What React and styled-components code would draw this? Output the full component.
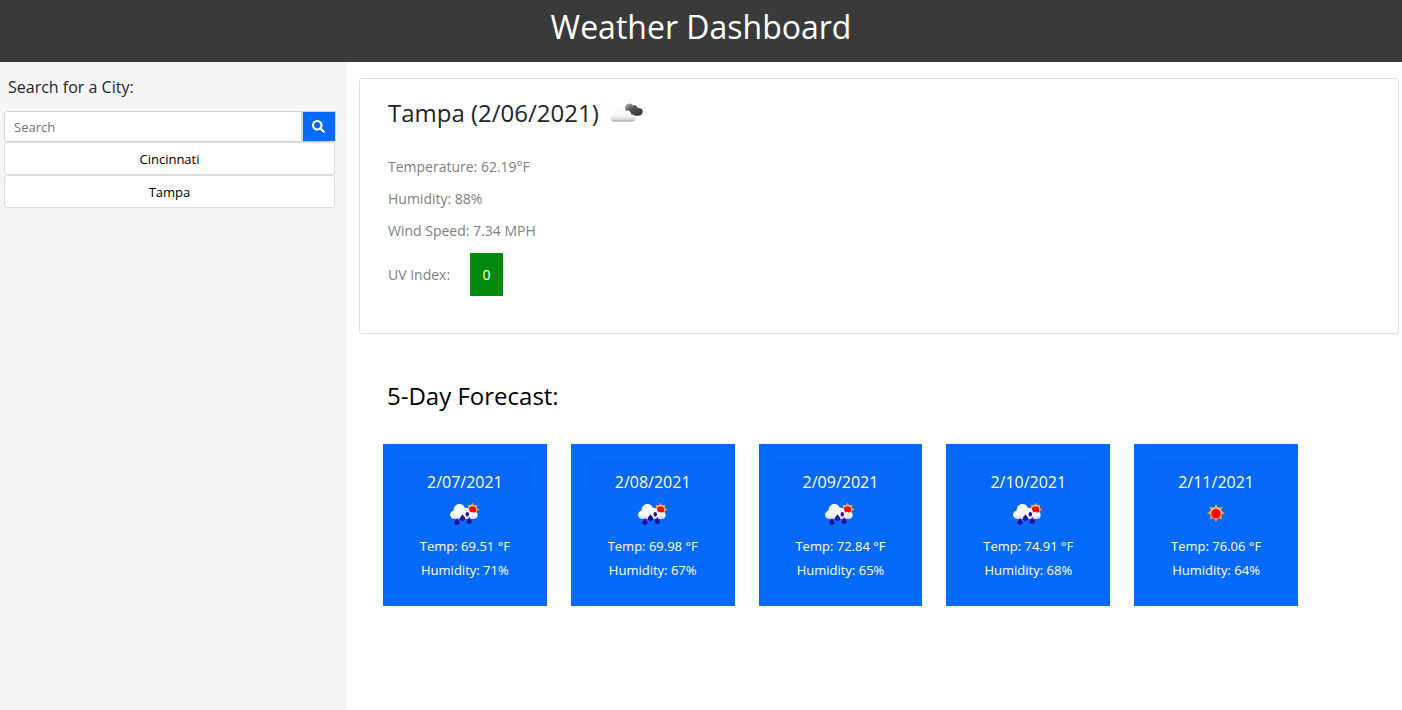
import React from "react";
import styled, { createGlobalStyle } from "styled-components";

const GlobalStyle = createGlobalStyle`
  *, *::before, *::after { box-sizing: border-box; }
  body {
    margin: 0;
    background: #fff;
    color: #212529;
    font-family: "Open Sans", "Noto Sans", sans-serif;
    font-size: 16px;
    line-height: 24px;
  }
  h1, h2, h3, p { margin: 0; font-weight: 400; }
  button, input { font-family: inherit; }
`;

const Page = styled.div`
  display: flex;
  flex-direction: column;
  min-height: 100vh;
`;

const Header = styled.header`
  padding: 8px 8px 16px;
  background: #3a3a3a;
  text-align: center;
`;

const Title = styled.h1`
  color: #fff;
  font-size: 32px;
  font-weight: 500;
  line-height: 38px;
`;

const Columns = styled.div`
  display: flex;
  flex: 1;
`;

const Sidebar = styled.aside`
  flex: 0 0 24.75%;
  padding: 13px 12px 16px 4px;
  background: #f6f4f5;
`;

const SearchLabel = styled.label`
  display: block;
  padding: 0 4px;
  margin-bottom: 12px;
`;

const SearchRow = styled.form`
  display: flex;
  height: 31px;
  margin-right: -1px;
`;

const SearchInput = styled.input`
  flex: 1;
  min-width: 0;
  padding: 1px 9px 0;
  border: 1px solid #ced4da;
  border-radius: 3px 0 0 3px;
  background: #fff;
  font-size: 13px;
  color: #212529;
  &::placeholder { color: #6c757d; opacity: 1; }
`;

const SearchButton = styled.button`
  display: flex;
  align-items: center;
  justify-content: center;
  width: 34px;
  padding: 0;
  border: 1px solid #ced4da;
  background: #066aff;
  color: #fff;
`;

const CityButton = styled.button`
  display: block;
  width: 100%;
  height: 33px;
  padding: 0;
  border: 1px solid #dcdcde;
  border-radius: 3px;
  background: #fff;
  color: #000;
  font-size: 13px;
  font-weight: 500;
`;

const Main = styled.main`
  flex: 1;
  min-width: 0;
  padding: 16px 3px 16px 12px;
`;

const CurrentCard = styled.section`
  padding: 17px 28px 37px;
  border: 1px solid #dfdfdf;
  border-radius: 3px;
`;

const CityHeading = styled.h2`
  display: flex;
  align-items: center;
  gap: 10px;
  margin-bottom: 21px;
  font-size: 24px;
  line-height: 34px;
`;

const Reading = styled.p`
  display: flex;
  align-items: center;
  gap: 20px;
  min-height: 32px;
  color: #808080;
  font-size: 14px;
`;

const UvReading = styled(Reading)`
  padding-top: 6px;
`;

const UvBadge = styled.span`
  min-width: 33px;
  padding: 10px 12px 9px;
  background: #028a0a;
  color: #fff;
  font-weight: 500;
  text-align: center;
`;

const ForecastSection = styled.section`
  padding: 44px 101px 0 24px;
`;

const ForecastHeading = styled.h2`
  padding: 0 4px;
  margin-bottom: 31px;
  color: #000;
  font-size: 24px;
  line-height: 35px;
`;

const ForecastGrid = styled.div`
  display: grid;
  grid-template-columns: repeat(5, 1fr);
  gap: 24px;
`;

const DayCard = styled.article`
  display: flex;
  flex-direction: column;
  align-items: center;
  padding: 16px 16px 24px;
  background: #066aff;
  color: #fff;
  font-size: 13px;
  font-weight: 500;
`;

const DayDate = styled.h3`
  align-self: stretch;
  padding-top: 10px;
  border-radius: 2px 2px 0 0;
  background: #0667f8;
  font-size: 16px;
  font-weight: 500;
  text-align: center;
`;

const IconSlot = styled.div`
  display: flex;
  align-items: center;
  height: 40px;
`;

const SearchIcon = () => (
  <svg width="13" height="13" viewBox="0 0 512 512" fill="currentColor" aria-hidden="true">
    <path d="M505 442.7L405.3 343c-4.5-4.500-10.600-7-17-7H372c27.600-35.300 44-79.700 44-128C416 93.100 322.900 0 208 0S0 93.100 0 208s93.100 208 208 208c48.300 0 92.700-16.400 128-44v16.300c0 6.400 2.500 12.500 7 17l99.700 99.700c9.400 9.400 24.600 9.400 33.900 0l28.300-28.300c9.400-9.400 9.400-24.600.1-34zM208 336c-70.700 0-128-57.200-128-128 0-70.700 57.200-128 128-128 70.700 0 128 57.200 128 128 0 70.700-57.200 128-128 128z" />
  </svg>
);

const CloudyIcon = () => (
  <svg width="36" height="24" viewBox="0 0 36 24" role="img" aria-label="Broken clouds">
    <defs>
      <linearGradient id="cloudShade" x1="0" y1="0" x2="0" y2="1">
        <stop offset="0" stopColor="#fcfcfc" />
        <stop offset="0.65" stopColor="#f2f2f2" />
        <stop offset="0.88" stopColor="#d4d4d4" />
        <stop offset="1" stopColor="#999999" />
      </linearGradient>
      <linearGradient id="darkCloud" x1="0" y1="0" x2="1" y2="1">
        <stop offset="0" stopColor="#c4c4c4" />
        <stop offset="0.4" stopColor="#555555" />
        <stop offset="1" stopColor="#303030" />
      </linearGradient>
    </defs>
    <path fill="url(#darkCloud)" d="M16 7c0-2.500 2-4.500 4.500-4.500 1.500 0 2.500.6 3.300 2 1-.6 2.600-.3 3.700.5.8.6 1.200 1.200 1.400 2 2.800-.3 4.900 1 4.900 3.400 0 2.600-2 4.300-4.600 4.300h-4C21 14.500 16 12 16 7z" />
    <path fill="url(#cloudShade)" d="M5.500 20.500C3 20.500 1.500 19 1.500 17c0-2 1.500-3.600 3.400-4 .2-4 2.700-7 6.300-7 2.600 0 4.500 1.300 5.500 3.600 3-.7 5.400 1 5.700 3.900 2.700-.2 4.400 1.300 4.400 3.500s-1.600 3.500-4.300 3.500z" />
  </svg>
);

const sunPoints = (cx, cy, outer, inner) =>
  Array.from({ length: 16 }, (_, i) => {
    const angle = (i * Math.PI) / 8 - Math.PI / 2;
    const r = i % 2 ? inner : outer;
    return `${cx + r * Math.cos(angle)},${cy + r * Math.sin(angle)}`;
  }).join(" ");

const SunShape = ({ cx, cy, size }) => (
  <g>
    <polygon points={sunPoints(cx, cy, size, size * 0.62)} fill="#e89a2c" />
    <circle cx={cx} cy={cy} r={size * 0.65} fill="#f8cf82" />
    <circle cx={cx} cy={cy + size * 0.08} r={size * 0.54} fill="#ff0800" />
  </g>
);

const SunIcon = () => (
  <svg width="20" height="20" viewBox="0 0 20 20" role="img" aria-label="Clear sky">
    <SunShape cx={10} cy={9} size={9} />
  </svg>
);

const Drop = ({ x, y }) => (
  <path
    transform={`translate(${x} ${y})`}
    d="M0-3.600C.5-2 2.700-.6 2.700 1.100 2.700 2.600 1.500 3.500 0 3.500S-2.700 2.600-2.700 1.100C-2.700-.6-.5-2 0-3.600z"
    fill="#2b0ba5"
  />
);

const RainIcon = () => (
  <svg width="32" height="24" viewBox="0 0 32 24" role="img" aria-label="Rain">
    <defs>
      <linearGradient id="rainCloud" x1="0" y1="0" x2="0" y2="1">
        <stop offset="0" stopColor="#ffffff" />
        <stop offset="0.75" stopColor="#fafafd" />
        <stop offset="1" stopColor="#c9cde0" />
      </linearGradient>
    </defs>
    <SunShape cx={23.500} cy={7.500} size={7} />
    <path fill="url(#rainCloud)" d="M5.500 17C3 17 1 15.300 1 13c0-2.200 1.400-3.800 3.500-4.200C4.700 4.700 7 2 10.400 2c2.800 0 4.500 1.400 5.400 3.700 2.300-.3 4 .8 4.700 2.900l.9 1.900c1.200-.6 2.600-.6 3.700.2 1-.9 3.200-.3 3.400 1.500.5 2.600-1 4.800-3.700 4.800z" />
    <Drop x={8} y={19.500} />
    <Drop x={13.500} y={15.500} />
    <Drop x={20.300} y={18.500} />
    <ellipse cx="18.300" cy="12.300" rx="1.700" ry="2.200" fill="#2b0ba5" />
  </svg>
);

const cities = ["Cincinnati", "Tampa"];

const forecast = [
  { date: "2/07/2021", temp: "69.51", humidity: 71, Icon: RainIcon },
  { date: "2/08/2021", temp: "69.98", humidity: 67, Icon: RainIcon },
  { date: "2/09/2021", temp: "72.84", humidity: 65, Icon: RainIcon },
  { date: "2/10/2021", temp: "74.91", humidity: 68, Icon: RainIcon },
  { date: "2/11/2021", temp: "76.06", humidity: 64, Icon: SunIcon },
];

export default function App() {
  return (
    <Page>
      <GlobalStyle />
      <Header>
        <Title>Weather Dashboard</Title>
      </Header>
      <Columns>
        <Sidebar>
          <SearchLabel htmlFor="city">Search for a City:</SearchLabel>
          <SearchRow onSubmit={(event) => event.preventDefault()}>
            <SearchInput id="city" type="text" placeholder="Search" />
            <SearchButton type="submit" aria-label="Search">
              <SearchIcon />
            </SearchButton>
          </SearchRow>
          {cities.map((city) => (
            <CityButton key={city} type="button">{city}</CityButton>
          ))}
        </Sidebar>
        <Main>
          <CurrentCard>
            <CityHeading>
              Tampa (2/06/2021)
              <CloudyIcon />
            </CityHeading>
            <Reading>Temperature: 62.19°F</Reading>
            <Reading>Humidity: 88%</Reading>
            <Reading>Wind Speed: 7.34 MPH</Reading>
            <UvReading>
              UV Index: <UvBadge>0</UvBadge>
            </UvReading>
          </CurrentCard>
          <ForecastSection>
            <ForecastHeading>5-Day Forecast:</ForecastHeading>
            <ForecastGrid>
              {forecast.map(({ date, temp, humidity, Icon }) => (
                <DayCard key={date}>
                  <DayDate>{date}</DayDate>
                  <IconSlot>
                    <Icon />
                  </IconSlot>
                  <p>Temp: {temp} °F</p>
                  <p>Humidity: {humidity}%</p>
                </DayCard>
              ))}
            </ForecastGrid>
          </ForecastSection>
        </Main>
      </Columns>
    </Page>
  );
}
